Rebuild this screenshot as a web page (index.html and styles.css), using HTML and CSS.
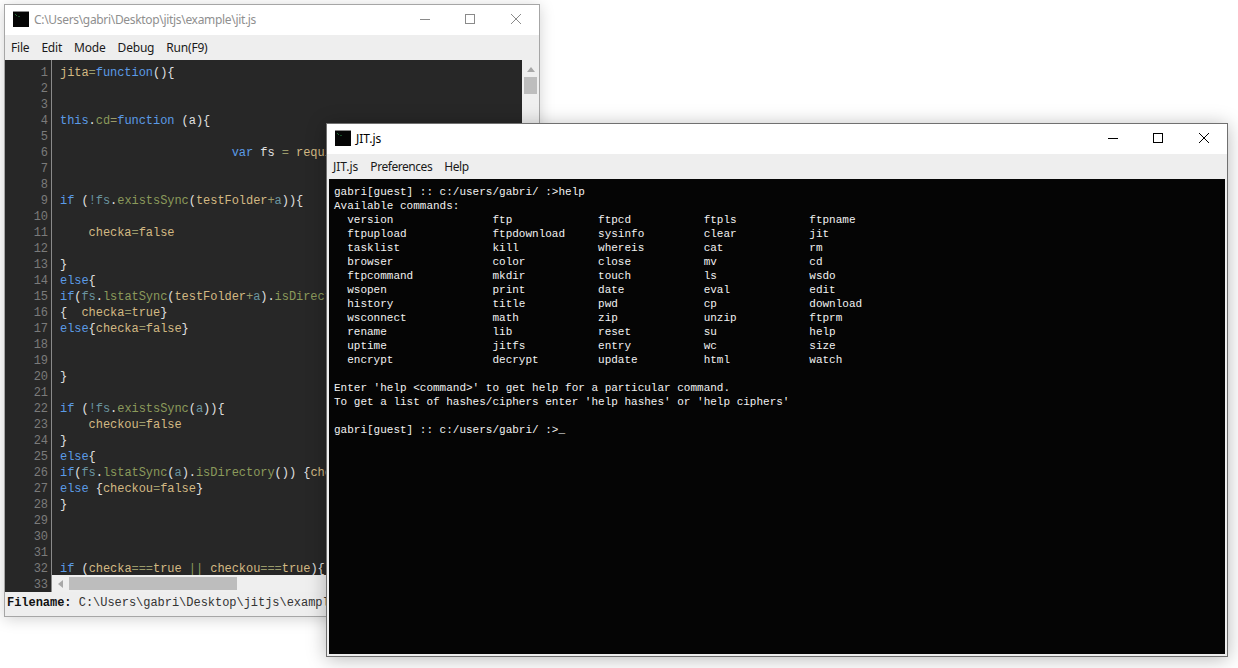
FILE: index.html
```html
<!DOCTYPE html>
<html lang="en">
<head>
<meta charset="utf-8">
<title>JIT.js</title>
<link rel="stylesheet" href="styles.css">
</head>
<body>
<svg class="defs" width="0" height="0" aria-hidden="true">
  <symbol id="app-icon" viewBox="0 0 16 16">
    <rect x="0" y="0" width="16" height="16" fill="#8c8c8c"/>
    <rect x="0" y="1" width="16" height="15" fill="#050505"/>
    <path d="M2 3h1v1h1v1H3V4H2z" fill="#1f6a34"/>
    <rect x="5" y="5" width="2" height="1" fill="#174a26"/>
  </symbol>
  <symbol id="ic-min" viewBox="0 0 10 10"><path d="M0 5.5h10" stroke="currentColor" fill="none"/></symbol>
  <symbol id="ic-max" viewBox="0 0 10 10"><rect x=".5" y=".5" width="9" height="9" stroke="currentColor" fill="none"/></symbol>
  <symbol id="ic-close" viewBox="0 0 10 10"><path d="M0 0l10 10M10 0L0 10" stroke="currentColor" fill="none"/></symbol>
</svg>

<main class="desktop">
  <section class="window editor-window">
    <header class="titlebar">
      <svg class="app-icon"><use href="#app-icon"/></svg>
      <span class="title">C:\Users\gabri\Desktop\jitjs\example\jit.js</span>
      <div class="controls">
        <svg class="ctl"><use href="#ic-min"/></svg>
        <svg class="ctl"><use href="#ic-max"/></svg>
        <svg class="ctl"><use href="#ic-close"/></svg>
      </div>
    </header>
    <nav class="menubar editor-menu">
      <span>File</span><span>Edit</span><span>Mode</span><span>Debug</span><span>Run(F9)</span>
    </nav>
    <div class="editor">
      <pre class="gutter">1
2
3
4
5
6
7
8
9
10
11
12
13
14
15
16
17
18
19
20
21
22
23
24
25
26
27
28
29
30
31
32
33</pre>
      <div class="editor-main">
        <div class="editor-top">
          <pre class="code"><span class="v">jita</span><span class="o">=</span><span class="k">function</span><span class="p">(){</span>


<span class="k">this</span><span class="p">.</span><span class="m">cd</span><span class="o">=</span><span class="k">function</span> <span class="p">(a){</span>

                        <span class="k">var</span> <span class="p">fs</span> <span class="o">=</span> <span class="v">require</span><span class="p">(</span><span class="s">'fs'</span><span class="p">);</span>


<span class="k">if</span> <span class="p">(</span><span class="t">!fs</span><span class="p">.</span><span class="m">existsSync</span><span class="p">(</span><span class="v">testFolder</span><span class="o">+</span><span class="t">a</span><span class="p">)){</span>

    <span class="v">checka</span><span class="o">=</span><span class="v">false</span>

<span class="p">}</span>
<span class="k">else</span><span class="p">{</span>
<span class="k">if</span><span class="p">(</span><span class="t">fs</span><span class="p">.</span><span class="m">lstatSync</span><span class="p">(</span><span class="v">testFolder</span><span class="o">+</span><span class="t">a</span><span class="p">).</span><span class="m">isDirectory</span><span class="p">())</span>
<span class="p">{</span>  <span class="v">checka</span><span class="o">=</span><span class="v">true</span><span class="p">}</span>
<span class="k">else</span><span class="p">{</span><span class="v">checka</span><span class="o">=</span><span class="v">false</span><span class="p">}</span>


<span class="p">}</span>

<span class="k">if</span> <span class="p">(</span><span class="t">!fs</span><span class="p">.</span><span class="m">existsSync</span><span class="p">(</span><span class="t">a</span><span class="p">)){</span>
    <span class="v">checkou</span><span class="o">=</span><span class="v">false</span>
<span class="p">}</span>
<span class="k">else</span><span class="p">{</span>
<span class="k">if</span><span class="p">(</span><span class="t">fs</span><span class="p">.</span><span class="m">lstatSync</span><span class="p">(</span><span class="t">a</span><span class="p">).</span><span class="m">isDirectory</span><span class="p">())</span> <span class="p">{</span><span class="v">checkou</span><span class="o">=</span><span class="v">true</span><span class="p">}</span>
<span class="k">else</span> <span class="p">{</span><span class="v">checkou</span><span class="o">=</span><span class="v">false</span><span class="p">}</span>
<span class="p">}</span>



<span class="k">if</span> <span class="p">(</span><span class="v">checka</span><span class="o">===</span><span class="v">true</span> <span class="m">||</span> <span class="v">checkou</span><span class="o">===</span><span class="v">true</span><span class="p">){</span></pre>
          <div class="vscroll">
            <span class="arrow-up"></span>
            <span class="vthumb"></span>
          </div>
        </div>
        <div class="hscroll">
          <span class="arrow-left"></span>
          <span class="hthumb"></span>
        </div>
      </div>
    </div>
    <footer class="statusbar"><b>Filename:</b> C:\Users\gabri\Desktop\jitjs\example\jit.js</footer>
  </section>

  <section class="window terminal-window">
    <header class="titlebar">
      <svg class="app-icon"><use href="#app-icon"/></svg>
      <span class="title">JIT.js</span>
      <div class="controls">
        <svg class="ctl"><use href="#ic-min"/></svg>
        <svg class="ctl"><use href="#ic-max"/></svg>
        <svg class="ctl"><use href="#ic-close"/></svg>
      </div>
    </header>
    <nav class="menubar terminal-menu">
      <span class="menu-first">JIT.js</span><span>Preferences</span><span>Help</span>
    </nav>
    <pre class="terminal">gabri[guest] :: c:/users/gabri/ :&gt;help
Available commands:
  version               ftp             ftpcd           ftpls           ftpname
  ftpupload             ftpdownload     sysinfo         clear           jit
  tasklist              kill            whereis         cat             rm
  browser               color           close           mv              cd
  ftpcommand            mkdir           touch           ls              wsdo
  wsopen                print           date            eval            edit
  history               title           pwd             cp              download
  wsconnect             math            zip             unzip           ftprm
  rename                lib             reset           su              help
  uptime                jitfs           entry           wc              size
  encrypt               decrypt         update          html            watch

Enter 'help &lt;command&gt;' to get help for a particular command.
To get a list of hashes/ciphers enter 'help hashes' or 'help ciphers'

gabri[guest] :: c:/users/gabri/ :&gt;_</pre>
  </section>
</main>
</body>
</html>
```
FILE: styles.css
```css
* { box-sizing: border-box; }
html, body { margin: 0; height: 100%; background: #fff; overflow: hidden; }
.defs { position: absolute; }
.desktop { position: relative; width: 1238px; height: 668px; }

.window {
  position: absolute;
  display: flex;
  flex-direction: column;
  background: #eee;
  font-family: "Noto Sans", sans-serif;
  font-size: 12px;
  letter-spacing: -0.32px;
}
.editor-window {
  left: 4px; top: 4px; width: 536px; height: 613px;
  border: 1px solid #a6a6a6;
  box-shadow: 0 2px 14px rgba(0,0,0,.18);
  color: #000;
}
.terminal-window {
  left: 326px; top: 123px; width: 902px; height: 534px;
  border: 1px solid #707070;
  box-shadow: 0 2px 18px rgba(0,0,0,.28);
}

.titlebar {
  display: flex;
  align-items: center;
  height: 30px;
  flex: none;
  background: #fff;
  padding: 0 0 2px 8px;
}
.app-icon { width: 16px; height: 16px; flex: none; }
.title { margin-left: 5px; white-space: nowrap; }
.editor-window .title { color: #8f8f8f; }
.terminal-window .title { color: #000; letter-spacing: 0; }
.controls { margin-left: auto; display: flex; gap: 35px; padding-right: 18px; }
.ctl { width: 10px; height: 10px; display: block; }
.ctl:last-child { margin-left: 1px; }
.editor-window .ctl { color: #8a8a8a; }
.terminal-window .ctl { color: #000; }

.menubar {
  display: flex;
  align-items: center;
  height: 25px;
  flex: none;
  background: #eee;
  color: #1a1a1a;
}
.editor-menu { padding-left: 6px; gap: 12px; letter-spacing: -0.2px; }
.terminal-menu { padding-left: 6px; gap: 12px; letter-spacing: -0.45px; }
.menu-first { letter-spacing: 0; }

.editor {
  flex: 1;
  min-height: 0;
  display: flex;
  background: #272727;
  font-family: "Liberation Mono", monospace;
  font-size: 12px;
  line-height: 16px;
  letter-spacing: -0.05px;
}
.gutter {
  margin: 0;
  flex: none;
  width: 47px;
  padding: 5px 3px 0 0;
  overflow: hidden;
  text-align: right;
  color: #7b7b7b;
  border-right: 1px solid #8a8a8a;
  font: inherit;
}
.editor-main { flex: 1; min-width: 0; display: flex; flex-direction: column; }
.editor-top { flex: 1; min-height: 0; display: flex; }
.code {
  margin: 0;
  flex: 1;
  min-width: 0;
  padding: 5px 0 0 8px;
  overflow: hidden;
  font: inherit;
  color: #e0e0e0;
}
.v { color: #d3b983; }
.k { color: #5b9be6; }
.o { color: #9a9a6a; }
.p { color: #e0e0e0; }
.m { color: #8b9a5b; }
.t { color: #6a95a0; }
.s { color: #ce9178; }

.vscroll {
  flex: none;
  width: 17px;
  background: #efefef;
  display: flex;
  flex-direction: column;
  align-items: center;
  padding-top: 7px;
  gap: 5px;
}
.arrow-up {
  width: 0; height: 0;
  border-left: 4px solid transparent;
  border-right: 4px solid transparent;
  border-bottom: 5px solid #a8a8a8;
}
.vthumb { width: 13px; height: 17px; background: #bdbdbd; }
.hscroll {
  flex: none;
  height: 17px;
  background: #efefef;
  display: flex;
  align-items: center;
  padding-left: 6px;
  gap: 6px;
}
.arrow-left {
  width: 0; height: 0;
  border-top: 4px solid transparent;
  border-bottom: 4px solid transparent;
  border-right: 5px solid #a8a8a8;
}
.hthumb { width: 168px; height: 13px; background: #bdbdbd; }

.statusbar {
  flex: none;
  height: 24px;
  padding: 3px 0 0 2px;
  line-height: 16px;
  background: #eee;
  color: #333;
  white-space: pre;
  overflow: hidden;
  font-family: "Liberation Mono", monospace;
  font-size: 12px;
  letter-spacing: -0.03px;
}
.statusbar b { color: #111; font-weight: bold; }

.terminal {
  flex: 1;
  min-height: 0;
  margin: 0 2px 2px;
  padding: 6px 0 0 5px;
  background: #050505;
  color: #f2f2f2;
  font-family: "Liberation Mono", monospace;
  font-size: 11px;
  line-height: 14px;
  letter-spacing: 0;
  overflow: hidden;
}
```
